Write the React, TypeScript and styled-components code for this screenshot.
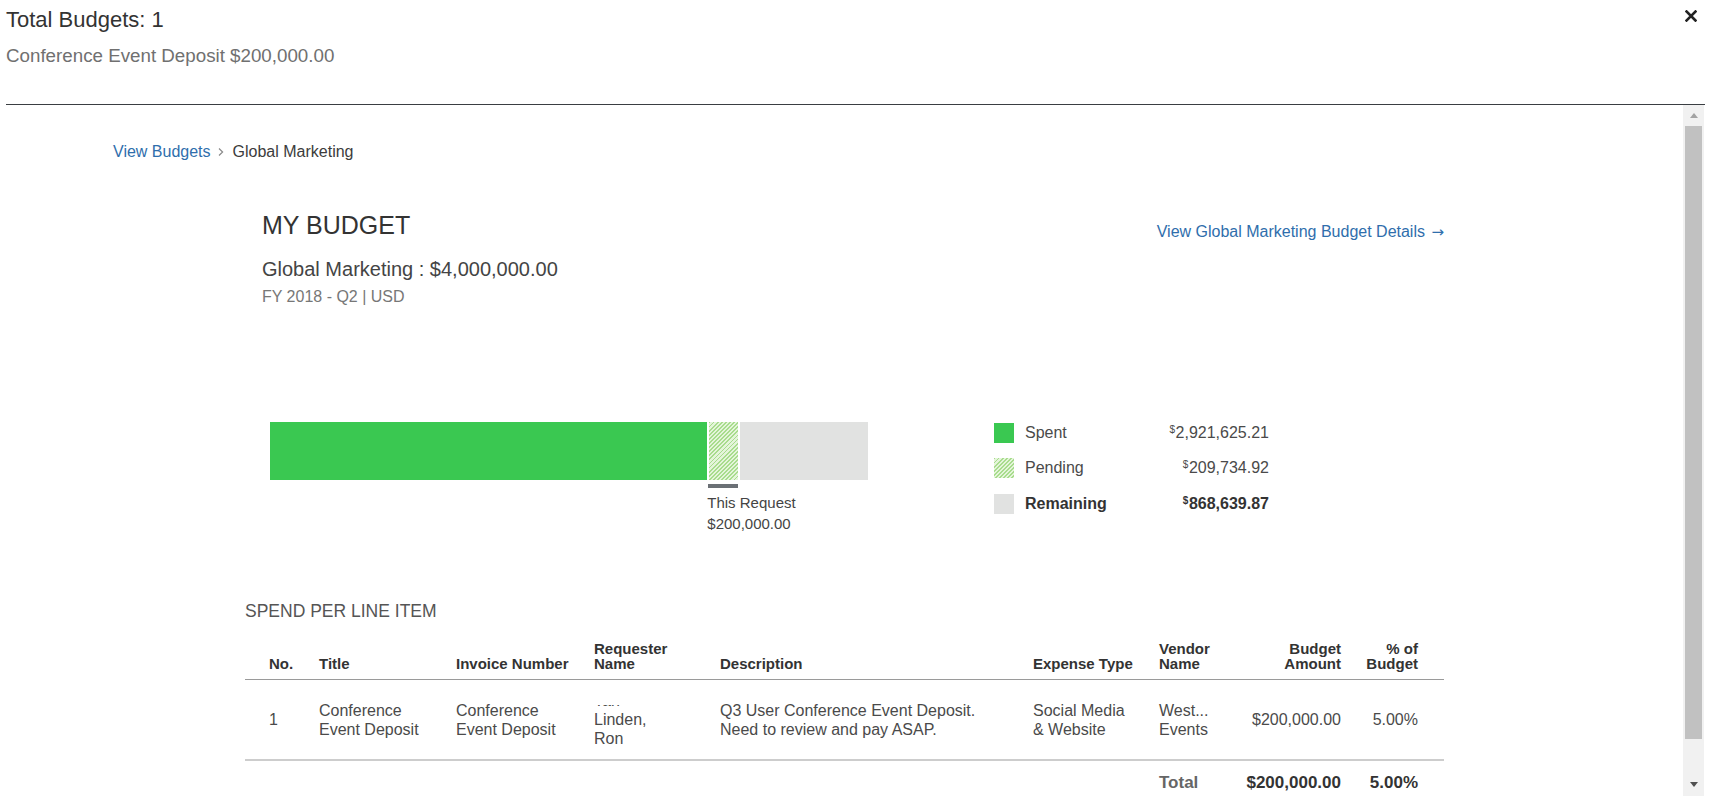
import React from "react";
import styled, { createGlobalStyle, css } from "styled-components";

const GlobalStyle = createGlobalStyle`
  html, body { margin: 0; padding: 0; background: #fff; }
  body {
    font-family: "Liberation Sans", Arial, Helvetica, sans-serif;
    color: #333;
  }
  * { box-sizing: border-box; }
`;

const BLUE = "#2f6eac";

const Modal = styled.div`
  height: 805px;
  display: flex;
  flex-direction: column;
  padding: 0 7px 9px 6px;
  overflow: hidden;
`;

const Header = styled.header`
  flex-shrink: 0;
  height: 104px;
  display: flex;
  justify-content: space-between;
  align-items: flex-start;
  padding: 7px 8px 0 0;
`;

const HeaderText = styled.div`
  display: flex;
  flex-direction: column;
`;

const ModalTitle = styled.h1`
  margin: 0;
  font-size: 22px;
  line-height: 26px;
  font-weight: normal;
  color: #333;
`;

const ModalSubtitle = styled.div`
  margin-top: 10.5px;
  font-size: 18.75px;
  line-height: 24px;
  color: #707070;
`;

const CloseButton = styled.button`
  margin-top: 3px;
  padding: 0;
  border: 0;
  background: none;
  cursor: pointer;
  svg { display: block; }
`;

const Body = styled.div`
  flex: 1;
  min-height: 0;
  display: flex;
  border-top: 1px solid #3a3e42;
`;

const Viewport = styled.div`
  flex: 1;
  min-width: 0;
  overflow: hidden;
  padding-top: 36.5px;
`;

const Breadcrumb = styled.nav`
  display: flex;
  align-items: center;
  padding-left: 107px;
  height: 20px;
  font-size: 16px;
  line-height: 20px;
`;

const CrumbLink = styled.a`
  color: ${BLUE};
  text-decoration: none;
`;

const CrumbSep = styled.span`
  display: flex;
  margin: 0 9px 0 7px;
  svg { display: block; }
`;

const CrumbCurrent = styled.span`
  color: #3c3c3c;
`;

const Column = styled.div`
  width: 1199px;
  margin: 0 auto;
`;

const BudgetSection = styled.section`
  padding-left: 17px;
`;

const BudgetHead = styled.div`
  display: flex;
  justify-content: space-between;
  align-items: flex-start;
  margin-top: 48.3px;
`;

const SectionTitle = styled.h2`
  margin: 0;
  font-size: 25px;
  line-height: 30px;
  font-weight: normal;
  color: #333;
`;

const DetailsLink = styled.a`
  margin-top: 12px;
  font-size: 16px;
  line-height: 20px;
  color: ${BLUE};
  text-decoration: none;
`;

const LinkArrow = styled.span`
  font-family: "DejaVu Sans", sans-serif;
  font-size: 15px;
  margin-left: 2px;
`;

const BudgetName = styled.div`
  margin-top: 15px;
  font-size: 20px;
  line-height: 24px;
  color: #444;
`;

const Period = styled.div`
  margin-top: 6px;
  font-size: 16px;
  line-height: 20px;
  color: #777;
`;

const ChartRow = styled.div`
  display: flex;
  align-items: flex-start;
  margin-top: 114.8px;
  padding-left: 8px;
`;

const BarBlock = styled.div`
  width: 598px;
  flex-shrink: 0;
`;

const Bar = styled.div`
  display: flex;
  height: 58px;
`;

type Kind = "spent" | "pending" | "remaining";

const fills: Record<Kind, ReturnType<typeof css>> = {
  spent: css`
    background: #3ac851;
  `,
  pending: css`
    background: repeating-linear-gradient(
      135deg,
      #a8dc8d 0px,
      #a8dc8d 1.3px,
      #e4f5da 1.3px,
      #e4f5da 2.9px
    );
  `,
  remaining: css`
    background: #e1e2e1;
  `,
};

const Segment = styled.div<{ $kind: Kind; $first?: boolean }>`
  height: 100%;
  ${(p) => fills[p.$kind]}
  background-clip: content-box;
  border-left: ${(p) => (p.$first ? "0" : "2px solid #fff")};
`;

const RequestMarker = styled.div`
  margin-top: 4px;
  height: 4.5px;
  background: #6b7075;
`;

const RequestNote = styled.div`
  margin-top: 3.5px;
  font-size: 15px;
  line-height: 21px;
  color: #444;
  white-space: nowrap;
`;

const Legend = styled.ul`
  list-style: none;
  margin: 1px 0 0 126px;
  padding: 0;
  width: 275px;
  display: flex;
  flex-direction: column;
  gap: 15.5px;
`;

const LegendRow = styled.li<{ $strong?: boolean }>`
  display: flex;
  align-items: center;
  height: 20px;
  font-size: 16px;
  color: ${(p) => (p.$strong ? "#333" : "#4a4a4a")};
  font-weight: ${(p) => (p.$strong ? "bold" : "normal")};
`;

const Swatch = styled.span<{ $kind: Kind }>`
  width: 20px;
  height: 20px;
  flex-shrink: 0;
  ${(p) => fills[p.$kind]}
`;

const LegendLabel = styled.span`
  margin-left: 11px;
  flex: 1;
`;

const LegendValue = styled.span`
  text-align: right;
`;

const Currency = styled.sup`
  font-size: 10px;
  vertical-align: 5px;
  line-height: 0;
  margin-right: 0.5px;
`;

const SpendTitle = styled.h3`
  margin: 66.7px 0 0;
  font-size: 17.5px;
  line-height: 22px;
  font-weight: normal;
  color: #555;
`;

const Table = styled.table`
  margin-top: 19px;
  width: 100%;
  table-layout: fixed;
  border-collapse: collapse;
`;

type Align = "left" | "right";

const HeadCell = styled.th<{ $align: Align; $pl: number; $pr: number }>`
  text-align: ${(p) => p.$align};
  vertical-align: bottom;
  padding: 0 ${(p) => p.$pr}px 8px ${(p) => p.$pl}px;
  font-size: 15px;
  line-height: 15px;
  font-weight: bold;
  color: #333;
  border-bottom: 1px solid #9a9a9a;
`;

const Cell = styled.td<{ $align: Align; $pl: number; $pr: number; $flush?: boolean }>`
  text-align: ${(p) => p.$align};
  vertical-align: middle;
  padding: ${(p) => (p.$flush ? 0 : 20.5)}px ${(p) => p.$pr}px
    ${(p) => (p.$flush ? 0 : 20.5)}px ${(p) => p.$pl}px;
  font-size: 16px;
  line-height: 19px;
  color: #4a4a4a;
  border-bottom: 2px solid #cdcdcd;
`;

const TotalCell = styled.td<{ $align: Align; $pl: number; $pr: number; $muted?: boolean }>`
  text-align: ${(p) => p.$align};
  vertical-align: top;
  padding: 12px ${(p) => p.$pr}px 14px ${(p) => p.$pl}px;
  font-size: 17px;
  line-height: 20px;
  font-weight: bold;
  white-space: nowrap;
  color: ${(p) => (p.$muted ? "#666" : "#333")};
`;

const NameClip = styled.div`
  margin-top: 13px;
  width: 80px;
  height: 43px;
  overflow: hidden;
  display: flex;
  flex-direction: column;
  justify-content: flex-end;
`;

const ScrollTrack = styled.div`
  width: 21px;
  margin-right: 1px;
  flex-shrink: 0;
  background: #f1f1f1;
  display: flex;
  flex-direction: column;
`;

const ScrollButton = styled.div`
  height: 21px;
  flex-shrink: 0;
  display: flex;
  align-items: center;
  justify-content: center;
`;

const Arrow = styled.span<{ $dir: "up" | "down"; $active?: boolean }>`
  width: 0;
  height: 0;
  border-left: 4.5px solid transparent;
  border-right: 4.5px solid transparent;
  ${(p) =>
    p.$dir === "up"
      ? css`border-bottom: 5px solid ${p.$active ? "#505050" : "#a3a3a3"};`
      : css`border-top: 5px solid ${p.$active ? "#505050" : "#a3a3a3"};`}
  margin-top: ${(p) => (p.$dir === "down" ? "-3px" : "0")};
`;

const ScrollThumb = styled.div`
  margin: 0 2px;
  height: 613px;
  background: #c1c1c1;
`;

const ScrollRest = styled.div`
  flex: 1;
`;

const budget = {
  total: 4000000,
  spent: 2921625.21,
  pending: 209734.92,
  remaining: 868639.87,
  request: 200000,
};

const pct = (v: number) => (v / budget.total) * 100;
const fmt = (v: number) =>
  v.toLocaleString("en-US", { minimumFractionDigits: 2, maximumFractionDigits: 2 });

const columns: { label: React.ReactNode; width: number; align: Align; pl: number; pr: number }[] = [
  { label: "No.", width: 62, align: "left", pl: 24, pr: 0 },
  { label: "Title", width: 137, align: "left", pl: 12, pr: 12 },
  { label: "Invoice Number", width: 138, align: "left", pl: 12, pr: 8 },
  { label: <>Requester<br />Name</>, width: 126, align: "left", pl: 12, pr: 12 },
  { label: "Description", width: 313, align: "left", pl: 12, pr: 12 },
  { label: "Expense Type", width: 126, align: "left", pl: 12, pr: 10 },
  { label: <>Vendor<br />Name</>, width: 88, align: "left", pl: 12, pr: 12 },
  { label: <>Budget<br />Amount</>, width: 118, align: "right", pl: 6, pr: 12 },
  { label: <>% of<br />Budget</>, width: 91, align: "right", pl: 12, pr: 26 },
];

const row: React.ReactNode[] = [
  "1",
  "Conference Event Deposit",
  "Conference Event Deposit",
  null,
  "Q3 User Conference Event Deposit. Need to review and pay ASAP.",
  "Social Media & Website",
  "West... Events",
  "$200,000.00",
  "5.00%",
];

const totals: (string | null)[] = [null, null, null, null, null, null, "Total", "$200,000.00", "5.00%"];

const legend: { kind: Kind; label: string; value: number; strong?: boolean }[] = [
  { kind: "spent", label: "Spent", value: budget.spent },
  { kind: "pending", label: "Pending", value: budget.pending },
  { kind: "remaining", label: "Remaining", value: budget.remaining, strong: true },
];

export default function App() {
  const spentPct = pct(budget.spent);
  return (
    <>
      <GlobalStyle />
      <Modal>
        <Header>
          <HeaderText>
            <ModalTitle>Total Budgets: 1</ModalTitle>
            <ModalSubtitle>Conference Event Deposit $200,000.00</ModalSubtitle>
          </HeaderText>
          <CloseButton aria-label="Close">
            <svg width="12" height="12" viewBox="0 0 12 12">
              <path d="M1.5 1.5L10.5 10.5M10.5 1.5L1.5 10.5" stroke="#222" strokeWidth="2.6" strokeLinecap="square" />
            </svg>
          </CloseButton>
        </Header>
        <Body>
          <Viewport>
            <Breadcrumb>
              <CrumbLink href="#">View Budgets</CrumbLink>
              <CrumbSep>
                <svg width="6" height="10" viewBox="0 0 6 10">
                  <path d="M1 1.5L4.6 5L1 8.5" fill="none" stroke="#8a8a8a" strokeWidth="1.2" />
                </svg>
              </CrumbSep>
              <CrumbCurrent>Global Marketing</CrumbCurrent>
            </Breadcrumb>
            <Column>
              <BudgetSection>
                <BudgetHead>
                  <SectionTitle>MY BUDGET</SectionTitle>
                  <DetailsLink href="#">
                    View Global Marketing Budget Details <LinkArrow>→</LinkArrow>
                  </DetailsLink>
                </BudgetHead>
                <BudgetName>Global Marketing : $4,000,000.00</BudgetName>
                <Period>FY 2018 - Q2 | USD</Period>
                <ChartRow>
                  <BarBlock>
                    <Bar>
                      <Segment $kind="spent" $first style={{ width: `${spentPct}%` }} />
                      <Segment $kind="pending" style={{ width: `${pct(budget.pending)}%` }} />
                      <Segment $kind="remaining" style={{ width: `${pct(budget.remaining)}%` }} />
                    </Bar>
                    <RequestMarker
                      style={{ marginLeft: `calc(${spentPct}% + 1px)`, width: `${pct(budget.request)}%` }}
                    />
                    <RequestNote style={{ marginLeft: `calc(${spentPct}% + 0.5px)` }}>
                      This Request
                      <br />${fmt(budget.request)}
                    </RequestNote>
                  </BarBlock>
                  <Legend>
                    {legend.map((l) => (
                      <LegendRow key={l.label} $strong={l.strong}>
                        <Swatch $kind={l.kind} />
                        <LegendLabel>{l.label}</LegendLabel>
                        <LegendValue>
                          <Currency>$</Currency>
                          {fmt(l.value)}
                        </LegendValue>
                      </LegendRow>
                    ))}
                  </Legend>
                </ChartRow>
              </BudgetSection>
              <SpendTitle>SPEND PER LINE ITEM</SpendTitle>
              <Table>
                <colgroup>
                  {columns.map((c, i) => (
                    <col key={i} style={{ width: c.width }} />
                  ))}
                </colgroup>
                <thead>
                  <tr>
                    {columns.map((c, i) => (
                      <HeadCell key={i} $align={c.align} $pl={c.pl} $pr={c.pr}>
                        {c.label}
                      </HeadCell>
                    ))}
                  </tr>
                </thead>
                <tbody>
                  <tr>
                    {columns.map((c, i) =>
                      i === 3 ? (
                        <Cell key={i} $align={c.align} $pl={c.pl} $pr={c.pr} $flush>
                          <NameClip>
                            <span>Tan</span>
                            <span>Linden,</span>
                            <span>Ron</span>
                          </NameClip>
                        </Cell>
                      ) : (
                        <Cell key={i} $align={c.align} $pl={c.pl} $pr={c.pr}>
                          {row[i]}
                        </Cell>
                      )
                    )}
                  </tr>
                  <tr>
                    {columns.map((c, i) => (
                      <TotalCell key={i} $align={c.align} $pl={c.pl} $pr={c.pr} $muted={i === 6}>
                        {totals[i]}
                      </TotalCell>
                    ))}
                  </tr>
                </tbody>
              </Table>
            </Column>
          </Viewport>
          <ScrollTrack>
            <ScrollButton>
              <Arrow $dir="up" />
            </ScrollButton>
            <ScrollThumb />
            <ScrollRest />
            <ScrollButton>
              <Arrow $dir="down" $active />
            </ScrollButton>
          </ScrollTrack>
        </Body>
      </Modal>
    </>
  );
}
